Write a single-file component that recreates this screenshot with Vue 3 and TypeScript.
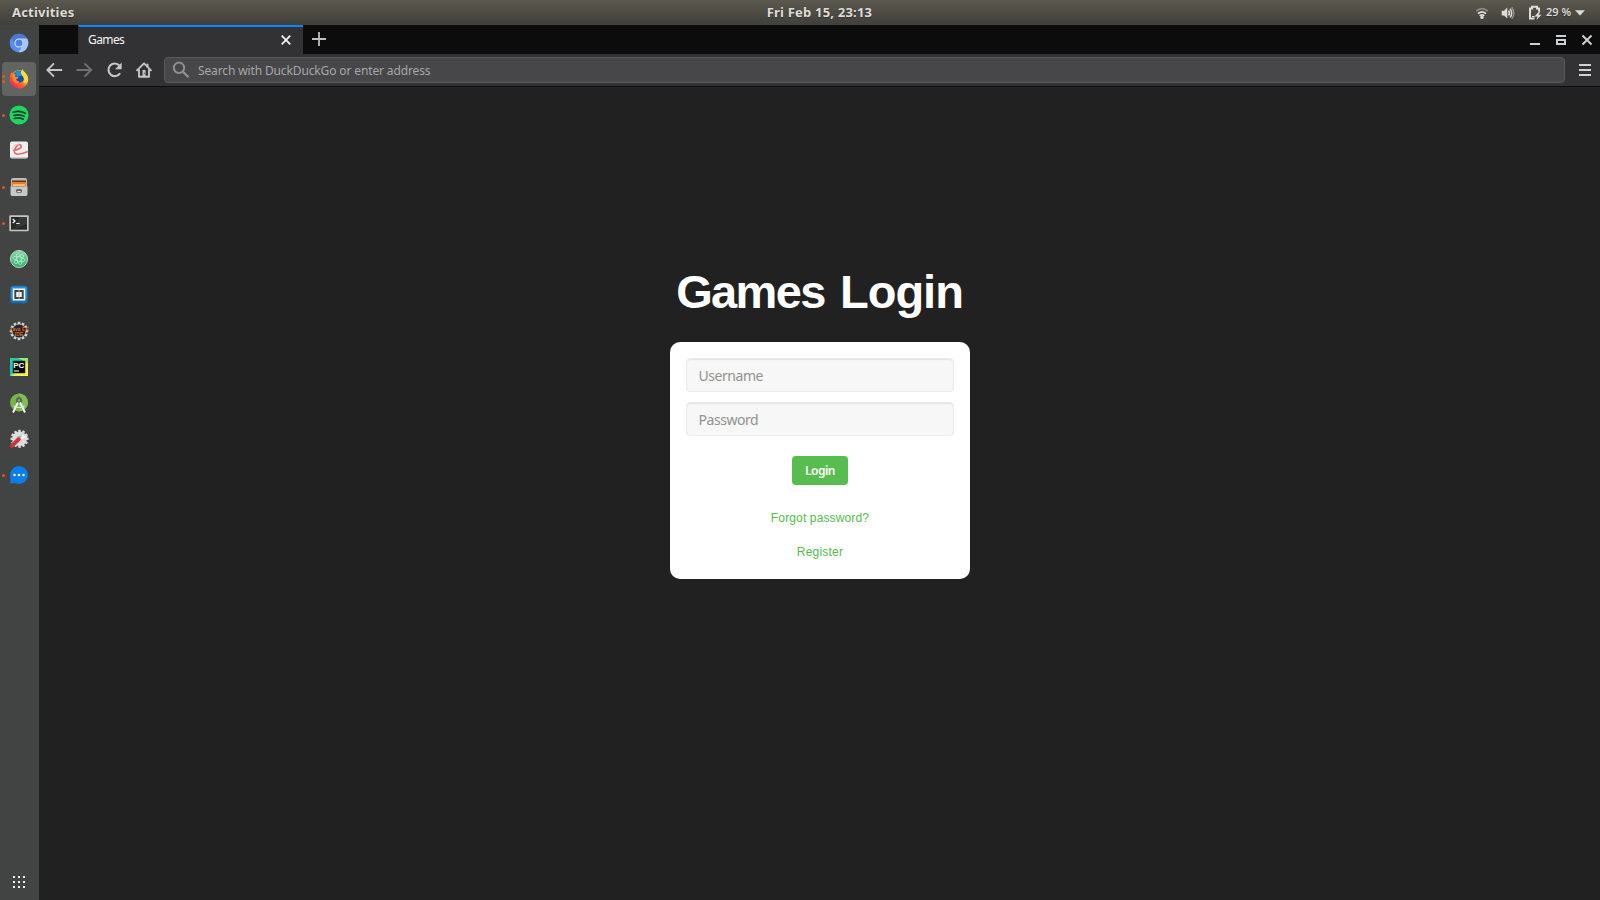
<script setup lang="ts">
import { ref } from 'vue'

interface DockItem {
  id: string
  windows: number
  active?: boolean
}

const dock: DockItem[] = [
  { id: 'chromium', windows: 0 },
  { id: 'firefox', windows: 2, active: true },
  { id: 'spotify', windows: 1 },
  { id: 'evince', windows: 0 },
  { id: 'files', windows: 1 },
  { id: 'terminal', windows: 1 },
  { id: 'atom', windows: 0 },
  { id: 'brackets', windows: 0 },
  { id: 'eclipse', windows: 0 },
  { id: 'pycharm', windows: 0 },
  { id: 'studio', windows: 0 },
  { id: 'tweaks', windows: 0 },
  { id: 'messages', windows: 1 },
]

const gridDots = [14, 19, 24]
const teeth = Array.from({ length: 12 }, (_, i) => i * 30)
const username = ref('')
const password = ref('')
</script>

<template>
  <div class="desktop">
    <header class="topbar">
      <span class="activities">Activities</span>
      <span class="clock">Fri Feb 15, 23:13</span>
      <div class="status">
        <svg class="wifi" width="14" height="14" viewBox="0 0 14 14" fill="none" stroke-width="1.7">
          <path d="M1.2 5.2Q7 .2 12.8 5.2" stroke="#8d8c85" />
          <path d="M3 7.6Q7 4 11 7.6" stroke="#dedcd8" />
          <path d="M4.7 9.8Q7 7.8 9.3 9.8" stroke="#dedcd8" />
          <circle cx="7" cy="11.4" r="1.7" fill="#dedcd8" />
        </svg>
        <svg class="sound" width="14" height="14" viewBox="0 0 14 14" fill="none" stroke-width="1.5">
          <path d="M.7 4.8h2.4L6.3 1.5v11L3.1 9.4H.7z" fill="#dedcd8" />
          <path d="M7.5 4.5q1.8 2.500 0 5M9 2.600q3.300 4.400 0 8.800" stroke="#dedcd8" />
          <path d="M10.700 1.200q4.200 5.800 0 11.600" stroke="#918f88" />
        </svg>
        <svg class="battery" width="14" height="16" viewBox="0 0 14 16" fill="none">
          <path d="M6.500 13.500H2V3.500h2V1.800h5v1.700h2v3" stroke="#dedcd8" stroke-width="2" />
          <path d="M4 11h2.500v1.200H4zM11 6.500l-4.500 5h3l-1 3.500 5-5.200H10.500l2-3.300z" fill="#dedcd8" />
        </svg>
        <span class="percent">29 %</span>
        <svg class="caret" width="10" height="6" viewBox="0 0 10 6"><path d="M0 .2h10L5 5.500z" fill="#dedcd8" /></svg>
      </div>
    </header>

    <div class="workspace">
      <nav class="dock">
        <div v-for="item in dock" :key="item.id" class="slot" :class="{ active: item.active }">
          <div class="pips"><i v-for="n in item.windows" :key="n" class="pip"></i></div>
          <svg width="20" height="20" viewBox="0 0 20 20">
            <g v-if="item.id === 'chromium'">
              <circle cx="10" cy="10" r="9.300" fill="#5b8def" />
              <path d="M2 5.200A9.300 9.300 0 0 1 18.100 5.500H10Q6.300 5.800 6 10z" fill="#4a78cf" />
              <path d="M18.100 5.500A9.300 9.300 0 0 1 9.600 19.300L14 11.800Q15.200 8.500 12 5.500z" fill="#a6c6fa" />
              <circle cx="10" cy="10" r="4.500" fill="#dceaff" />
              <circle cx="10" cy="10" r="3.500" fill="#4b80e6" />
            </g>
            <g v-else-if="item.id === 'firefox'">
              <defs>
                <linearGradient id="fx" x1="1" y1="0" x2=".1" y2=".9">
                  <stop offset="0" stop-color="#fff34a" /><stop offset=".35" stop-color="#ffd52a" />
                  <stop offset=".6" stop-color="#ff6a25" /><stop offset="1" stop-color="#ee1f68" />
                </linearGradient>
              </defs>
              <circle cx="10" cy="10.400" r="9.200" fill="url(#fx)" />
              <path d="M1 9Q.800 5 2.300 3l2 2z" fill="#ff662b" />
              <path d="M5.300 3.700Q8.300.800 12 2.300L15 6.500Q16 10 13.500 12.500 10 14.700 7 12z" fill="#154cae" />
              <path d="M6 3.400Q9 1 12 2.500L12 7 8 8z" fill="#1592df" />
              <path d="M3.300 5Q5 4.300 6.600 5.200L6 7.500 9.500 8.300Q9 9.800 7 10.400 7.500 12.200 10.500 12.400L8 14.500 4 12z" fill="#ff8d24" />
              <path d="M12.200 5.500Q11.600 2.200 13.400.3 15 2.400 16.600 4.400 19.600 8 18.600 13L14.600 14Q16.300 9.500 12.200 5.500" fill="#ffdc35" />
            </g>
            <g v-else-if="item.id === 'spotify'">
              <circle cx="10" cy="10" r="9.600" fill="#1ed760" />
              <path d="M4.200 7.300Q10.500 5.200 16.300 8.300M4.700 10.500Q10.400 8.800 15.200 11.300M5.200 13.500Q10 12.100 14.200 14.200" fill="none" stroke="#163d2a" stroke-width="1.700" stroke-linecap="round" />
            </g>
            <g v-else-if="item.id === 'evince'" transform="translate(0 -1)">
              <rect x="1" y="1.500" width="18" height="17" rx="2" fill="#efefef" />
              <path d="M2 17.500h16" stroke="#c9c9c9" />
              <path d="M4 10.500Q13.500 9 12 5.500 10.500 3 7 7 3.300 13 8 14.200 12.500 14.500 18.800 11.500" fill="none" stroke="#dc6c6c" stroke-width="1.500" />
              <path d="M3 8.500Q6 3.500 10 4" fill="none" stroke="#f0bcbc" stroke-width="1" />
            </g>
            <g v-else-if="item.id === 'files'">
              <rect x="2" y="1" width="16" height="18" rx="2" fill="#bcbcba" />
              <path d="M3 3.500h14v6H3z" fill="#552414" />
              <path d="M3 4.800h14v4.400H3z" fill="#ed7b24" />
              <path d="M4 7h12v2H4z" fill="#ffbd69" />
              <path d="M1.500 9.500h17v7.500q0 2-2 2h-13q-2 0-2-2z" fill="#c7c7c5" />
              <rect x="7" y="12" width="6" height="4" rx="1.900" fill="#5e5e5c" />
              <path d="M8.500 14.600h3" stroke="#eee" stroke-width="1.300" />
            </g>
            <g v-else-if="item.id === 'terminal'">
              <rect x=".3" y="2.300" width="19.400" height="16" rx="1" fill="#c5c5c2" />
              <rect x="2" y="4" width="16" height="12.700" fill="#252927" />
              <path d="M3.700 6l2.300 2-2.300 2M7.200 10.500h3.500" fill="none" stroke="#fff" stroke-width="1.200" />
              <path d="M10 4h8v7L6 16z" fill="#777" opacity=".2" />
            </g>
            <g v-else-if="item.id === 'atom'">
              <defs><linearGradient id="atomBg" x2="0" y2="1"><stop stop-color="#89d9a7" /><stop offset="1" stop-color="#32ac72" /></linearGradient></defs>
              <circle cx="10" cy="10" r="8.600" fill="url(#atomBg)" stroke="#d0e6d8" stroke-width=".8" />
              <g fill="none" stroke="#b5ecd0" stroke-width=".8">
                <ellipse cx="10" cy="10" rx="6" ry="2.200" transform="rotate(15 10 10)" />
                <ellipse cx="10" cy="10" rx="6" ry="2.200" transform="rotate(75 10 10)" />
                <ellipse cx="10" cy="10" rx="6" ry="2.200" transform="rotate(135 10 10)" />
              </g>
            </g>
            <g v-else-if="item.id === 'brackets'" transform="translate(0 -.5)">
              <rect x="1.200" y="1.200" width="17.600" height="17.600" rx="3" fill="#1270b5" />
              <rect x="2" y="2" width="16" height="13" rx="2" fill="#2691d5" />
              <rect x="3.800" y="4" width="12.400" height="12" fill="#fff" />
              <rect x="5.300" y="5.500" width="9.400" height="9" fill="#3e4145" />
              <rect x="7.300" y="7.500" width="5.400" height="5" fill="#fff" />
              <path d="M9.500 5h1v10h-1z" fill="#aaa" />
            </g>
            <g v-else-if="item.id === 'eclipse'">
              <path v-for="a in teeth" :key="a" d="M8.700.8h2.600v4H8.700z" fill="#d5d5d3" :transform="`rotate(${a} 10 10)`" />
              <circle cx="10" cy="10" r="7" fill="#292635" stroke="#cacac7" stroke-width=".8" />
              <path d="M3 7h14v3H3zM7 12h6v3H7z" fill="#24140d" />
              <text x="10" y="9.800" class="eclipse-mark">Java EE</text>
              <text x="10" y="14.800" class="eclipse-mark">IDE</text>
            </g>
            <g v-else-if="item.id === 'pycharm'">
              <defs><linearGradient id="pc" x1="0" x2="1" y2="1"><stop stop-color="#21d789" /><stop offset=".45" stop-color="#15c4c7" /><stop offset=".6" stop-color="#e8f052" /><stop offset="1" stop-color="#fcf84a" /></linearGradient></defs>
              <rect x="1" y="1" width="18" height="18" fill="url(#pc)" />
              <path d="M9 1h10v5z" fill="#9eea61" />
              <rect x="3.800" y="3.800" width="12.400" height="12.400" fill="#080808" />
              <text x="4.200" y="11" class="pycharm-mark">PC</text>
              <path d="M5 14h5" stroke="#fff" />
            </g>
            <g v-else-if="item.id === 'studio'">
              <circle cx="10" cy="9.500" r="9" fill="#78b34c" />
              <path d="M10 .5a9 9 0 0 1 0 18z" fill="#83bb55" />
              <circle cx="10" cy="7.500" r="3.200" fill="#566b4f" />
              <path d="M9.200 3.500h1.600V6H9.200z" fill="#5b6b55" />
              <path d="M9 9.500L4 19.500M11 9.500l5 10" stroke="#f1f1f1" stroke-width="2" />
              <path d="M4.500 13q5.500 3 11 0" fill="none" stroke="#e3e8e0" stroke-width="1.200" />
              <circle cx="10" cy="7.500" r="1.200" fill="#83ad65" />
            </g>
            <g v-else-if="item.id === 'tweaks'">
              <path v-for="a in teeth" :key="a" d="M9.200.8h2.500v4H9.200z" fill="#ddd" :transform="`rotate(${a} 10.500 9.800)`" />
              <circle cx="10.500" cy="9.800" r="7.300" fill="#dededc" />
              <circle cx="10.500" cy="9.800" r="3" fill="#b0b0ae" />
              <path d="M8.500 11.500l4-4q-.3-3.800 3-4.500l-1 2.500 1.700 1.500 2.400-1q0 3.700-4.100 4l-4 4z" fill="#f3f3f3" stroke="#aaa" stroke-width=".4" />
              <path d="M2.900 16.800L9.800 10.300" stroke="#c9373b" stroke-width="4" stroke-linecap="round" />
            </g>
            <g v-else>
              <circle cx="10" cy="10" r="9" fill="#0b7eea" />
              <path d="M1.500 9v9.500q3 .2 5-1.500z" fill="#0b7eea" />
              <g fill="#e5f3ff"><circle cx="5.500" cy="10" r="1.300" /><circle cx="10" cy="10" r="1.300" /><circle cx="14.500" cy="10" r="1.300" /></g>
            </g>
          </svg>
        </div>
        <svg class="apps" width="38" height="36" viewBox="0 0 38 36">
          <template v-for="y in gridDots" :key="y">
            <rect v-for="x in gridDots" :key="x" :x="x - 1" :y="y - 2" width="2" height="2" fill="#f2f2f0" />
          </template>
        </svg>
      </nav>

      <section class="browser">
        <div class="tabs">
          <div class="tab">
            <span class="tab-title">Games</span>
            <svg class="tab-close" width="10" height="10" viewBox="0 0 10 10"><path d="M.7.7l8.600 8.600M9.300.7L.7 9.300" stroke="#f4f4f4" stroke-width="1.800" /></svg>
          </div>
          <svg class="new-tab" width="14" height="14" viewBox="0 0 14 14"><path d="M7 0v14M0 7h14" stroke="#c0c0c0" stroke-width="1.800" /></svg>
          <svg class="controls" width="64" height="12" viewBox="0 0 64 12" fill="none" stroke="#cbd0d2">
            <path d="M0 10h10" stroke-width="2" />
            <path d="M26 2h10" stroke-width="2" /><path d="M27 6h8v4h-8z" stroke-width="2" />
            <path d="M52.500 1.500l9 9M61.500 1.500l-9 9" stroke-width="2" />
          </svg>
        </div>
        <div class="toolbar">
          <svg class="nav-icons" width="107" height="18" viewBox="0 0 107 18" fill="none" stroke="#c5c5c6" stroke-width="1.900">
            <path d="M16.200 9H1.500M8 2.300L1.300 9 8 15.700" />
            <path d="M30.500 9h14.700M38.500 2.300L45.200 9l-6.700 6.700" stroke="#707072" />
            <path d="M73.500 4.700A6.300 6.300 0 1 0 74.100 12.200" stroke-width="2.100" />
            <path d="M75.700 1.500v6.700H69z" fill="#c5c5c6" stroke="none" />
            <path d="M90.500 9.800L98 2.300l7.500 7.500M93 8.500v7.300h10V8.500" stroke-linejoin="round" />
            <path d="M101.500 2.700v3" /><path d="M96.500 9h3v6h-3z" fill="#c5c5c6" stroke="none" /><path d="M98.300 11.800v1" stroke="#323234" stroke-width="1" />
          </svg>
          <div class="address">
            <svg width="18" height="18" viewBox="0 0 18 18" fill="none" stroke="#909092" stroke-width="2"><circle cx="7" cy="6.800" r="5.200" /><path d="M10.800 10.600l5.700 5.700" stroke-width="2.300" /></svg>
            <span class="hint">Search with DuckDuckGo or enter address</span>
          </div>
          <svg class="menu" width="12" height="12" viewBox="0 0 12 12"><path d="M0 1h12M0 6h12M0 11h12" stroke="#d0d0d1" stroke-width="2" /></svg>
        </div>
        <main class="page">
          <h1><span class="title-lead">Games</span> Login</h1>
          <form class="card" @submit.prevent>
            <input v-model="username" type="text" placeholder="Username" />
            <input v-model="password" type="password" placeholder="Password" />
            <button type="submit"><span>Login</span></button>
            <a class="forgot">Forgot password?</a>
            <a class="register">Register</a>
          </form>
        </main>
      </section>
    </div>
  </div>
</template>

<style>
body { margin: 0; overflow: hidden; }
</style>

<style scoped>
* { box-sizing: border-box; }
svg { display: block; flex: none; }
.desktop { width: 1600px; height: 900px; display: flex; flex-direction: column; font-family: "Noto Sans", "Open Sans", sans-serif; background: #212121; white-space: nowrap; }
.topbar { height: 25px; flex: none; display: grid; grid-template-columns: 1fr auto 1fr; align-items: center; padding: 0 15px 0 12px; background: linear-gradient(#5b584e, #403f3a); color: #dedcd8; font-size: 13px; font-weight: 700; text-shadow: 0 1px 1px #33322e; }
.activities { padding-bottom: 2px; letter-spacing: .2px; }
.clock { padding-bottom: 2px; transform: translateX(21px); letter-spacing: .2px; }
.status { display: flex; align-items: center; justify-content: flex-end; }
.sound { margin-left: 12px; }
.battery { margin-left: 13px; }
.percent { margin: 0 0 2px 4px; font-size: 11px; font-weight: 600; width: 25px; }
.caret { margin-left: 4px; }
.workspace { flex: 1; min-height: 0; display: flex; }
.dock { width: 39px; flex: none; display: flex; flex-direction: column; background: #414442; }
.slot { width: 34px; height: 34px; margin: 1px 2px 1px; display: flex; align-items: center; border-radius: 4px; }
.slot.active { background: #626462; }
.pips { width: 7px; display: flex; flex-direction: column; gap: 2px; }
.pip { width: 3px; height: 3px; border-radius: 50%; background: #e95420; }
.apps { margin-top: auto; }
.eclipse-mark { font: 700 5px "Liberation Sans", sans-serif; text-anchor: middle; fill: #d87522; }
.pycharm-mark { font: 700 8px "Liberation Sans", sans-serif; fill: #fff; }
.browser { flex: 1; display: flex; flex-direction: column; }
.tabs { height: 29px; flex: none; display: flex; align-items: center; padding: 0 6px 0 39px; background: #0c0c0d; }
.tab { width: 225px; height: 29px; display: flex; align-items: center; justify-content: space-between; border-top: 2px solid #0a84ff; border-left: 1px solid #29292a; padding: 0 12px 0 9px; background: #323234; color: #f5f5f6; }
.tab-title { padding-bottom: 2px; font-size: 12px; line-height: 17px; letter-spacing: -.6px; }
.tab-close { margin-bottom: 1px; }
.new-tab { margin: 0 0 1px 9px; }
.controls { margin-left: auto; }
.toolbar { height: 33px; flex: none; display: flex; align-items: center; padding: 0 9px 1px 6px; background: #323234; border-bottom: 1px solid #0c0c0d; }
.nav-icons { margin: 0 11px 0 1px; }
.address { flex: 1; height: 26px; display: flex; align-items: center; padding-left: 7px; background: #474749; border: 1px solid #5a5a5c; border-radius: 4px; }
.hint { margin-left: 8px; padding-top: 1px; color: #a6a6a8; font-size: 12px; letter-spacing: -.13px; }
.menu { margin-left: 14px; }
.page { flex: 1; display: flex; flex-direction: column; align-items: center; padding: 177px 31px 0 0; background: #212121; }
.page h1 { height: 78px; margin: 0; padding-left: 31px; color: #fff; font: 700 47px/56px "Liberation Sans", Arial, sans-serif; letter-spacing: -1px; }
.title-lead { margin-right: 3px; letter-spacing: -1.6px; }
.card { width: 300px; height: 237px; margin-left: 31px; padding: 16px; display: flex; flex-direction: column; align-items: center; background: #fff; border-radius: 10px; }
input { width: 100%; height: 34px; flex: none; margin-bottom: 10px; padding: 0 12px; background: #f7f7f7; border: 1px solid #ececec; border-radius: 4px; box-shadow: inset 0 1px 1px #e3e3e3; outline: 0; font: 14px "Noto Sans", sans-serif; letter-spacing: -.45px; }
input::placeholder { color: #929292; opacity: 1; }
button { width: 56px; height: 29px; flex: none; margin: 10px 0 0; padding: 0 0 0 1px; background: #57bd4e; border: 0; border-radius: 4px; color: #fff; font: 600 12px "Noto Sans", sans-serif; letter-spacing: -.5px; }
a { color: #56bb4c; font: 12px/18px "Liberation Sans", Arial, sans-serif; }
.forgot { margin-top: 24px; padding-left: 1px; letter-spacing: .14px; }
.register { margin-top: 16px; padding-left: 1px; letter-spacing: .2px; }
</style>
